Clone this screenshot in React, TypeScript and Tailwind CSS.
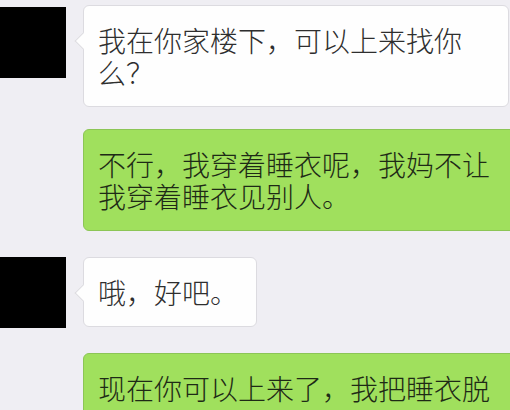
import React from 'react';

type Side = 'left' | 'right';

interface BubbleProps {
  side: Side;
  width?: string;
  children: React.ReactNode;
}

const Bubble: React.FC<BubbleProps> = ({ side, width, children }) => {
  const isLeft = side === 'left';
  return (
    <div
      className={`relative shrink-0 rounded-[6px] border pl-[14px] pr-[18px] py-[18px] text-[28px] font-light leading-[32px] ${
        isLeft ? 'bg-[#fefefe] border-[#dcdbe0] text-[#2e2e2e]' : 'bg-[#a0e05d] border-[#8cc556] text-[#1e2a16]'
      } ${width ?? ''}`}
    >
      {isLeft && (
        <span className="absolute left-[-7px] top-[29px] h-[12px] w-[12px] rotate-45 border-b border-l border-[#dcdbe0] bg-[#fefefe]" />
      )}
      <span className="relative">{children}</span>
    </div>
  );
};

const Avatar: React.FC = () => <div className="ml-[-5px] h-[71px] w-[71px] shrink-0 bg-black" />;

export default function App() {
  return (
    <div
      className="flex h-[410px] w-[510px] flex-col overflow-hidden bg-[#efeef3]"
      style={{ fontFamily: '"Noto Sans CJK SC", "Noto Sans", sans-serif' }}
    >
      <div className="mt-[5px] flex items-start gap-[17px]">
        <div className="mt-[2px]">
          <Avatar />
        </div>
        <Bubble side="left" width="w-[426px]">
          我在你家楼下，可以上来找你么？
        </Bubble>
      </div>

      <div className="mt-[22px] flex pl-[83px]">
        <Bubble side="right" width="w-[450px]">
          不行，我穿着睡衣呢，我妈不让我穿着睡衣见别人。
        </Bubble>
      </div>

      <div className="mt-[26px] flex items-start gap-[17px]">
        <Avatar />
        <Bubble side="left">哦，好吧。</Bubble>
      </div>

      <div className="mt-[25px] flex pl-[83px]">
        <Bubble side="right" width="w-[450px]">
          现在你可以上来了，我把睡衣脱
        </Bubble>
      </div>
    </div>
  );
}
